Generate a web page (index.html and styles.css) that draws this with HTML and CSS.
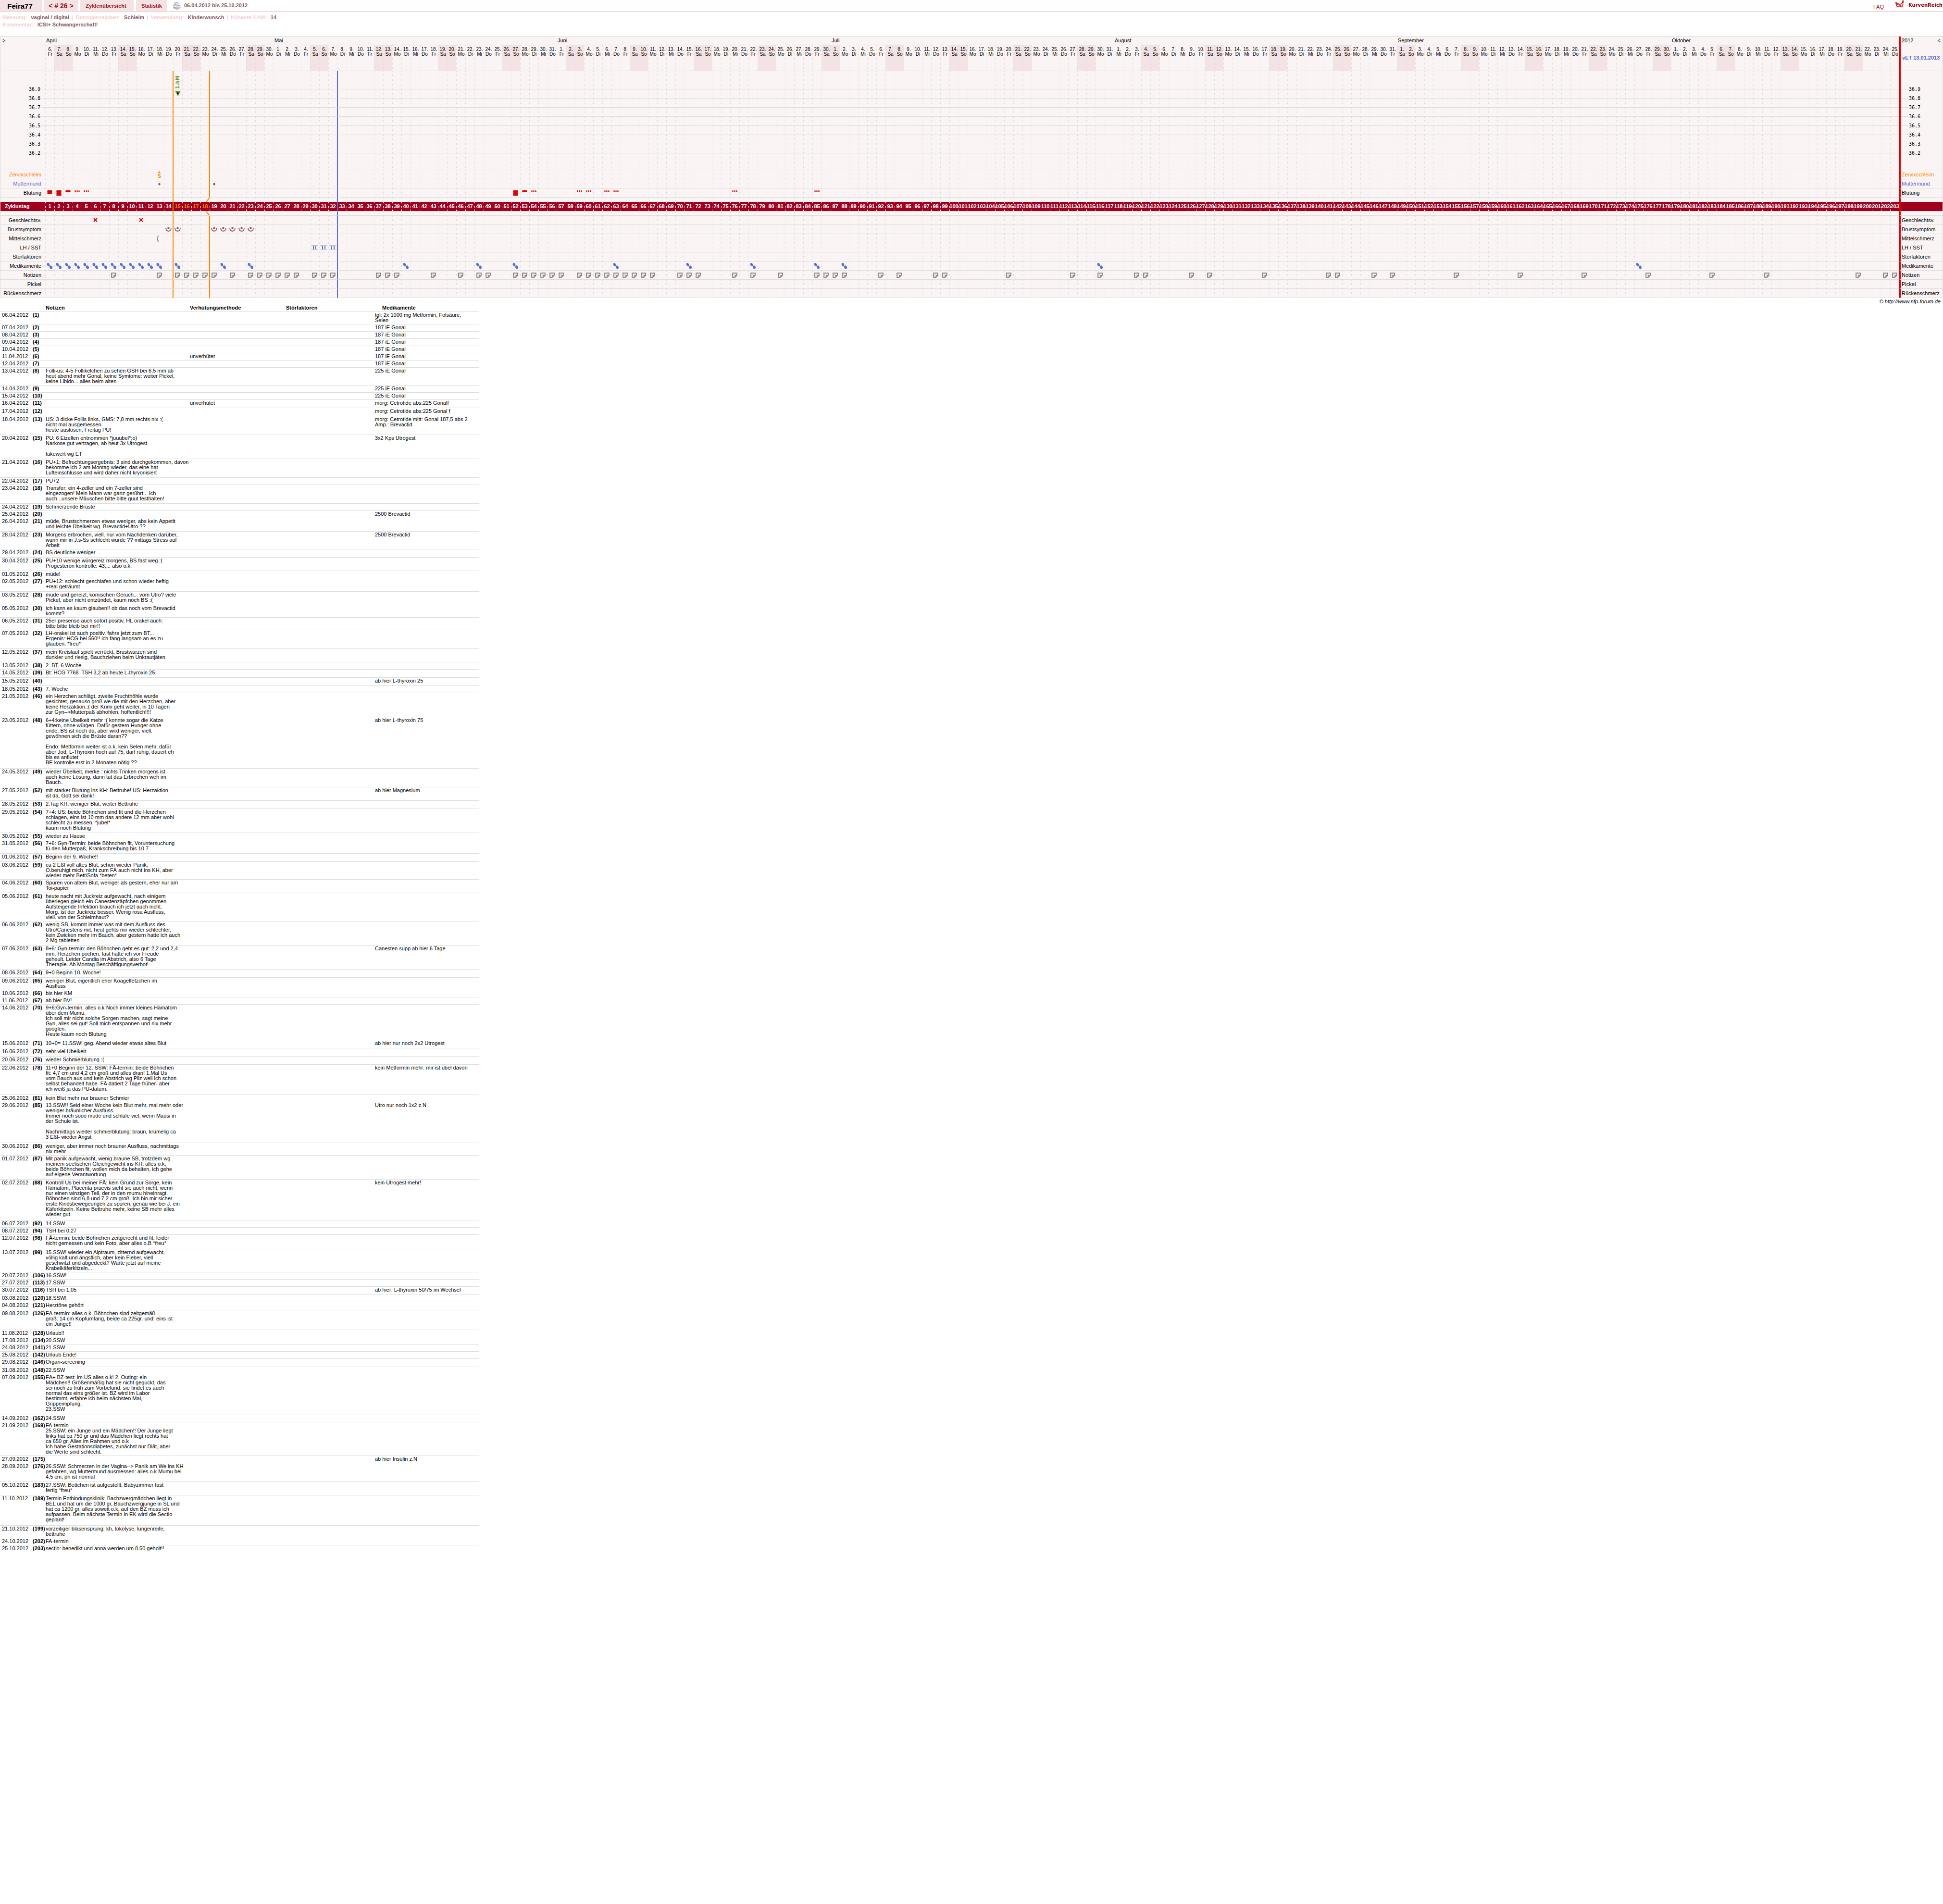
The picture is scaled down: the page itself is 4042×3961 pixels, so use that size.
FILE: index.html
```html
<!DOCTYPE html>
<html lang="de">
<head>
  <meta charset="utf-8">
  <title>KurvenReich - Feira77</title>
  <link rel="stylesheet" href="styles.css">
</head>
<body>
<header>
  <nav>
    <a class="tab user" href="#user">Feira77</a>
    <span class="tab cycle"><a href="#prev">&lt;</a> # 26 <a href="#next">&gt;</a></span>
    <a class="tab overview" href="#zyklen">Zyklenübersicht</a>
    <a class="tab stats" href="#statistik">Statistik</a>
    <a class="print" href="#print" aria-label="Drucken">
      <svg width="16" height="16" viewBox="0 0 16 16">
        <path d="M4 0.500L11 2 10 8 3 7z" fill="#cfe3f5" stroke="#8aa5bf"/>
        <path d="M1 7L4 5.500 14.500 8 15 12 8 15.500 1.500 13z" fill="#d2d2d2" stroke="#8c8c8c"/>
        <path d="M1.500 8.500L8.500 10.500 15 8.500" fill="none" stroke="#fff"/>
        <path d="M8.500 11L8.500 15" stroke="#777"/>
        <path d="M3 11.500L7 13" stroke="#555"/>
      </svg>
    </a>
    <span class="range">06.04.2012 bis 25.10.2012</span>
  </nav>
  <div class="brand">
    <a class="faq" href="#faq">FAQ</a>
    <a class="logo" href="#home">
      <svg width="22" height="20" viewBox="0 0 22 20">
        <path d="M1 12H22M6 6V20M13 6V20M18 6V20M2 16H20" stroke="#e4e4e4" fill="none"/>
        <path d="M4 6L5 13H17L18 4M4 6L10 10 13 9 18 4" fill="none" stroke="#b4102c" stroke-width="1.500"/>
        <circle cx="4" cy="6" r="1.800" fill="#f08000" stroke="#b4102c"/>
        <circle cx="8" cy="9" r="1.800" fill="#f08000" stroke="#b4102c"/>
        <circle cx="12" cy="10" r="1.800" fill="#f08000" stroke="#b4102c"/>
        <circle cx="18" cy="3" r="1.800" fill="#f08000" stroke="#b4102c"/>
      </svg>
      KurvenReich
    </a>
  </div>
</header>

<div class="info">
  <p><b>Messung:</b> <span>vaginal / digital</span> <i>|</i> <b>Östrogenzeichen:</b> <span>Schleim</span> <i>|</i> <b>Verwendung:</b> <span>Kinderwunsch</span> <i>|</i> <b>früheste 1.hM:</b> <span>14</span></p>
  <p><b>Kommentar:</b> <span>ICSI+ Schwangerschaft!</span></p>
</div>

<!-- icons used in the chart cells -->
<svg class="defs" width="0" height="0">
  <symbol id="i-pill" viewBox="0 0 13 13">
    <ellipse cx="3.500" cy="3.500" rx="2.600" ry="3.700" transform="rotate(-25 3.500 3.500)" fill="#5570cf"/>
    <ellipse cx="9" cy="9" rx="2.800" ry="3.700" transform="rotate(-25 9 9)" fill="#5570cf"/>
    <path d="M4.500 8L8 5" stroke="#b9d3ee"/>
  </symbol>
  <symbol id="i-note" viewBox="0 0 11 11">
    <path d="M1 1H10V6L6 10H1z" fill="#e4e4e4" stroke="#7a6d6b" stroke-width="1.500"/>
    <path d="M6 10V6H10z" fill="#aaa" stroke="#7a6d6b"/>
  </symbol>
  <symbol id="i-x" viewBox="0 0 9 9">
    <path d="M1 1L8 8M8 1L1 8" stroke="#d60000" stroke-width="2"/>
  </symbol>
  <symbol id="i-breast" viewBox="0 0 13 10">
    <path d="M1 2C1 11 12 11 12 2" fill="none" stroke="#8a5a5e" stroke-width="1.800"/>
    <circle cx="6.500" cy="2.500" r="2.200" fill="#8a5a5e"/>
  </symbol>
  <symbol id="i-moon" viewBox="0 0 13 13">
    <path d="M5 0.500C1 4 1 9 5 12.500" fill="none" stroke="#777" stroke-width="1.500"/>
  </symbol>
  <symbol id="i-test" viewBox="0 0 15 10">
    <path d="M0 0.500H15M0 9.500H15" stroke="#bbb"/>
    <path d="M5 1.500V8.500M10 1.500V8.500" stroke="#5570cf" stroke-width="2"/>
  </symbol>
  <symbol id="i-mumu" viewBox="0 0 11 8">
    <path d="M0 0.500H11" stroke="#a88"/>
    <ellipse cx="5.500" cy="5" rx="2.200" ry="2.600" fill="#8a5a5e"/>
  </symbol>
  <symbol id="i-b0" viewBox="0 0 11 11">
    <circle cx="1.500" cy="1.500" r="1.500" fill="#d60000"/><circle cx="5.500" cy="1.500" r="1.500" fill="#d60000"/><circle cx="9.500" cy="1.500" r="1.500" fill="#d60000"/>
  </symbol>
  <symbol id="i-b1" viewBox="0 0 11 11"><rect width="11" height="3" rx="1.500" fill="#d60000"/></symbol>
  <symbol id="i-b2" viewBox="0 0 11 11"><rect width="11" height="3" rx="1.500" fill="#d60000"/><rect y="4" width="11" height="3" rx="1.500" fill="#d60000"/></symbol>
  <symbol id="i-b3" viewBox="0 0 11 11"><rect width="11" height="3" rx="1.500" fill="#d60000"/><rect y="4" width="11" height="3" rx="1.500" fill="#d60000"/><rect y="8" width="11" height="3" rx="1.500" fill="#d60000"/></symbol>
</svg>

<table class="chart" id="chart"></table>
<p class="copy">© <a href="#forum">http://www.nfp-forum.de</a></p>

<table class="notes">
  <colgroup><col class="c-date"><col class="c-day"><col class="c-note"><col class="c-verh"><col class="c-stoer"><col class="c-med"></colgroup>
  <thead>
    <tr><th></th><th></th><th>Notizen</th><th>Verhütungsmethode</th><th>Störfaktoren</th><th class="med">Medikamente</th></tr>
  </thead>
  <tbody>
    <tr><td>06.04.2012</td><td>(1)</td><td></td><td></td><td></td><td>tgl: 2x 1000 mg Metformin, Folsäure,<br>Selen</td></tr>
    <tr><td>07.04.2012</td><td>(2)</td><td></td><td></td><td></td><td>187 iE Gonal</td></tr>
    <tr><td>08.04.2012</td><td>(3)</td><td></td><td></td><td></td><td>187 iE Gonal</td></tr>
    <tr><td>09.04.2012</td><td>(4)</td><td></td><td></td><td></td><td>187 iE Gonal</td></tr>
    <tr><td>10.04.2012</td><td>(5)</td><td></td><td></td><td></td><td>187 iE Gonal</td></tr>
    <tr><td>11.04.2012</td><td>(6)</td><td></td><td>unverhütet</td><td></td><td>187 iE Gonal</td></tr>
    <tr><td>12.04.2012</td><td>(7)</td><td></td><td></td><td></td><td>187 iE Gonal</td></tr>
    <tr><td>13.04.2012</td><td>(8)</td><td>Folli-us: 4-5 Follikelchen zu sehen GSH bei 6,5 mm ab<br>heut abend mehr Gonal, keine Symtome: weiter Pickel,<br>keine Libido... alles beim alten</td><td></td><td></td><td>225 iE Gonal</td></tr>
    <tr><td>14.04.2012</td><td>(9)</td><td></td><td></td><td></td><td>225 iE Gonal</td></tr>
    <tr><td>15.04.2012</td><td>(10)</td><td></td><td></td><td></td><td>225 iE Gonal</td></tr>
    <tr class="loose"><td>16.04.2012</td><td>(11)</td><td></td><td>unverhütet</td><td></td><td>morg: Cetrotide abs:225 Gonalf</td></tr>
    <tr class="loose"><td>17.04.2012</td><td>(12)</td><td></td><td></td><td></td><td>morg: Cetrotide abs:225 Gonal f</td></tr>
    <tr class="loose"><td>18.04.2012</td><td>(13)</td><td>US: 3 dicke Follis links, GMS: 7,8 mm rechts nix :(<br>nicht mal ausgemessen.<br>heute auslösen, Freitag PU!</td><td></td><td></td><td>morg: Cetrotide mitt: Gonal 187,5 abs 2<br>Amp.: Brevactid</td></tr>
    <tr class="loose"><td>20.04.2012</td><td>(15)</td><td>PU: 6 Eizellen entnommen *juuubel*;o)<br>Narkose gut vertragen, ab heut 3x Utrogest<br><br>fakewert wg ET</td><td></td><td></td><td>3x2 Kps Utrogest</td></tr>
    <tr class="loose"><td>21.04.2012</td><td>(16)</td><td>PU+1: Befruchtungsergebnis: 3 sind durchgekommen, davon<br>bekomme ich 2 am Montag wieder, das eine hat<br>Lufteinschlüsse und wird daher nicht kryonisiert</td><td></td><td></td><td></td></tr>
    <tr><td>22.04.2012</td><td>(17)</td><td>PU+2</td><td></td><td></td><td></td></tr>
    <tr class="loose"><td>23.04.2012</td><td>(18)</td><td>Transfer: ein 4-zeller und ein 7-zeller sind<br>eingezogen! Mein Mann war ganz gerührt... ich<br>auch...unsere Mäuschen bitte bitte guut festhalten!</td><td></td><td></td><td></td></tr>
    <tr><td>24.04.2012</td><td>(19)</td><td>Schmerzende Brüste</td><td></td><td></td><td></td></tr>
    <tr><td>25.04.2012</td><td>(20)</td><td></td><td></td><td></td><td>2500 Brevactid</td></tr>
    <tr class="loose"><td>26.04.2012</td><td>(21)</td><td>müde, Brustschmerzen etwas weniger, abs kein Appetit<br>und leichte Übelkeit wg. Brevactid+Utro ??</td><td></td><td></td><td></td></tr>
    <tr><td>28.04.2012</td><td>(23)</td><td>Morgens erbrochen, viell. nur vom Nachdenken darüber,<br>wann mir in J.s-Ss schlecht wurde ?? mittags Stress auf<br>Arbeit</td><td></td><td></td><td>2500 Brevactid</td></tr>
    <tr class="loose"><td>29.04.2012</td><td>(24)</td><td>BS deutliche weniger</td><td></td><td></td><td></td></tr>
    <tr class="loose"><td>30.04.2012</td><td>(25)</td><td>PU+10 wenige würgereiz morgens, BS fast weg :(<br>Progesteron kontrolle: 43,... also o.k.</td><td></td><td></td><td></td></tr>
    <tr><td>01.05.2012</td><td>(26)</td><td>müde!</td><td></td><td></td><td></td></tr>
    <tr class="loose"><td>02.05.2012</td><td>(27)</td><td>PU+12: schlecht geschlafen und schon wieder heftig<br>+real geträumt</td><td></td><td></td><td></td></tr>
    <tr class="loose"><td>03.05.2012</td><td>(28)</td><td>müde und gereizt, komischen Geruch... vom Utro? viele<br>Pickel, aber nicht entzündet, kaum noch BS :(</td><td></td><td></td><td></td></tr>
    <tr><td>05.05.2012</td><td>(30)</td><td>ich kann es kaum glauben!! ob das noch vom Brevactid<br>kommt?</td><td></td><td></td><td></td></tr>
    <tr><td>06.05.2012</td><td>(31)</td><td>25er presense auch sofort positiv, HL orakel auch:<br>bitte bitte bleib bei mir!!</td><td></td><td></td><td></td></tr>
    <tr class="loose"><td>07.05.2012</td><td>(32)</td><td>LH-orakel ist auch positiv, fahre jetzt zum BT...<br>Ergenis: HCG bei 560!! ich fang langsam an es zu<br>glauben. *freu*</td><td></td><td></td><td></td></tr>
    <tr class="loose"><td>12.05.2012</td><td>(37)</td><td>mein Kreislauf spielt verrückt, Brustwarzen sind<br>dunkler und riesig, Bauchziehen beim Unkrautjäten</td><td></td><td></td><td></td></tr>
    <tr><td>13.05.2012</td><td>(38)</td><td>2. BT. 6.Woche</td><td></td><td></td><td></td></tr>
    <tr class="loose"><td>14.05.2012</td><td>(39)</td><td>Bt: HCG 7768&nbsp; TSH 3,2 ab heute L-thyroxin 25</td><td></td><td></td><td></td></tr>
    <tr class="loose"><td>15.05.2012</td><td>(40)</td><td></td><td></td><td></td><td>ab hier L-thyroxin 25</td></tr>
    <tr><td>18.05.2012</td><td>(43)</td><td>7. Woche</td><td></td><td></td><td></td></tr>
    <tr class="loose"><td>21.05.2012</td><td>(46)</td><td>ein Herzchen schlägt, zweite Fruchthöhle wurde<br>gesichtet, genauso groß we die mit den Herzchen, aber<br>keine Herzaktion.:( der Krimi geht weiter, in 10 Tagen<br>zur Gyn--&gt;Mutterpaß abhohlen, hoffentlich!!!!</td><td></td><td></td><td></td></tr>
    <tr class="wide"><td>23.05.2012</td><td>(48)</td><td>6+4:keine Übelkeit mehr :( konnte sogar die Katze<br>füttern, ohne würgen. Dafür gestern Hunger ohne<br>ende. BS ist noch da, aber wird weniger, viell.<br>gewöhnen sich die Brüste daran??<br><br>Endo: Metformin weiter ist o.k, kein Selen mehr, dafür<br>aber Jod, L-Thyroxin hoch auf 75, darf ruhig, dauert eh<br>bis es anflutet<br>BE kontrolle erst in 2 Monaten nötig ??</td><td></td><td></td><td>ab hier L-thyroxin 75</td></tr>
    <tr class="loose"><td>24.05.2012</td><td>(49)</td><td>wieder Übelkeit, merke : nichts Trinken morgens ist<br>auch keine Lösung, dann tut das Erbrechen weh im<br>Bauch.</td><td></td><td></td><td></td></tr>
    <tr class="loose"><td>27.05.2012</td><td>(52)</td><td>mit starker Blutung ins KH: Bettruhe! US: Herzaktion<br>ist da, Gott sei dank!</td><td></td><td></td><td>ab hier Magnesium</td></tr>
    <tr class="loose"><td>28.05.2012</td><td>(53)</td><td>2.Tag KH, weniger Blut, weiter Bettruhe</td><td></td><td></td><td></td></tr>
    <tr class="loose"><td>29.05.2012</td><td>(54)</td><td>7+4: US: beide Böhnchen sind fit und die Herzchen<br>schlagen, eins ist 10 mm das andere 12 mm aber wohl<br>schlecht zu messen. *jubel*<br>kaum noch Blutung</td><td></td><td></td><td></td></tr>
    <tr><td>30.05.2012</td><td>(55)</td><td>wieder zu Hause</td><td></td><td></td><td></td></tr>
    <tr class="loose"><td>31.05.2012</td><td>(56)</td><td>7+6: Gyn-Termin: beide Böhnchen fit, Voruntersuchung<br>fü den Mutterpaß, Krankschreibung bis 10.7</td><td></td><td></td><td></td></tr>
    <tr class="loose"><td>01.06.2012</td><td>(57)</td><td>Beginn der 9. Woche!!</td><td></td><td></td><td></td></tr>
    <tr><td>03.06.2012</td><td>(59)</td><td>ca 2 Eßl voll altes Blut, schon wieder Panik,<br>O.beruhigt mich, nicht zum FÄ auch nicht ins KH, aber<br>wieder mehr Bett/Sofa *beten*</td><td></td><td></td><td></td></tr>
    <tr class="loose"><td>04.06.2012</td><td>(60)</td><td>Spuren von altem Blut, weniger als gestern, eher nur am<br>Toi-papier</td><td></td><td></td><td></td></tr>
    <tr><td>05.06.2012</td><td>(61)</td><td>heute nacht mit Juckreiz aufgewacht, nach einigem<br>überlegen gleich ein Canestenzäpfchen genommen.<br>Aufsteigende Infektion brauch ich jetzt auch nicht.<br>Morg. ist der Juckreiz besser. Wenig rosa Ausfluss,<br>viell. von der Schleimhaut?</td><td></td><td></td><td></td></tr>
    <tr class="loose"><td>06.06.2012</td><td>(62)</td><td>wenig SB, kommt immer was mit dem Ausfluss des<br>Utro/Canestens mit, heut gehts mir wieder schlechter,<br>kein Zwicken mehr im Bauch, aber gestern hatte ich auch<br>2 Mg-tabletten</td><td></td><td></td><td></td></tr>
    <tr class="loose"><td>07.06.2012</td><td>(63)</td><td>8+6: Gyn-termin: den Böhnchen geht es gut: 2,2 und 2,4<br>mm, Herzchen pochen, fast hätte ich vor Freude<br>geheult. Leider Candia im Abstrich, also 6 Tage<br>Therapie. Ab Montag Beschäftigungsverbot!</td><td></td><td></td><td>Canesten supp ab hier 6 Tage</td></tr>
    <tr class="loose"><td>08.06.2012</td><td>(64)</td><td>9+0 Beginn 10. Woche!</td><td></td><td></td><td></td></tr>
    <tr><td>09.06.2012</td><td>(65)</td><td>weniger Blut, eigentlich eher Koagelfetzchen im<br>Ausfluss</td><td></td><td></td><td></td></tr>
    <tr><td>10.06.2012</td><td>(66)</td><td>bis hier KM</td><td></td><td></td><td></td></tr>
    <tr><td>11.06.2012</td><td>(67)</td><td>ab hier BV!</td><td></td><td></td><td></td></tr>
    <tr class="wide"><td>14.06.2012</td><td>(70)</td><td>9+6:Gyn-termin: alles o.k Noch immer kleines Hämatom<br>über dem Mumu.<br>Ich soll mir nicht solche Sorgen machen, sagt meine<br>Gyn, alles sei gut! Soll mich entspannen und nix mehr<br>googlen.<br>Heute kaum noch Blutung</td><td></td><td></td><td></td></tr>
    <tr class="loose"><td>15.06.2012</td><td>(71)</td><td>10+0= 11.SSW! geg. Abend wieder etwas altes Blut</td><td></td><td></td><td>ab hier nur noch 2x2 Utrogest</td></tr>
    <tr class="loose"><td>16.06.2012</td><td>(72)</td><td>sehr viel Übelkeit</td><td></td><td></td><td></td></tr>
    <tr class="loose"><td>20.06.2012</td><td>(76)</td><td>wieder Schmierblutung :(</td><td></td><td></td><td></td></tr>
    <tr class="wide"><td>22.06.2012</td><td>(78)</td><td>11+0 Beginn der 12. SSW: FÄ-termin: beide Böhnchen<br>fit: 4,7 cm und 4,2 cm groß und alles dran! 1.Mal Us<br>vom Bauch aus und kein Abstrich wg Pilz weil ich schon<br>selbst behandelt habe. FÄ datiert 2 Tage früher- aber<br>ich weiß ja das PU-datum.</td><td></td><td></td><td>kein Metformin mehr: mir ist übel davon</td></tr>
    <tr><td>25.06.2012</td><td>(81)</td><td>kein Blut mehr nur brauner Schmier</td><td></td><td></td><td></td></tr>
    <tr class="wide"><td>29.06.2012</td><td>(85)</td><td>13.SSW!! Seid einer Woche kein Blut mehr, mal mehr oder<br>weniger bräunlicher Ausfluss.<br>Immer noch sooo müde und schlafe viel, wenn Mausi in<br>der Schule ist.<br><br>Nachmittags wieder schmierblutung: braun, krümelig ca<br>3 Eßl- wieder Angst</td><td></td><td></td><td>Utro nur noch 1x2 z.N</td></tr>
    <tr><td>30.06.2012</td><td>(86)</td><td>weniger, aber immer noch brauner Ausfluss, nachmittags<br>nix mehr</td><td></td><td></td><td></td></tr>
    <tr class="loose"><td>01.07.2012</td><td>(87)</td><td>Mit panik aufgewacht, wenig braune SB, trotzdem wg<br>meinem seelischen Gleichgewicht ins KH: alles o.k,<br>beide Böhnchen fit, wollen mich da behalten, ich gehe<br>auf eigene Verantwortung</td><td></td><td></td><td></td></tr>
    <tr class="wide"><td>02.07.2012</td><td>(88)</td><td>Kontroll Us bei meiner FÄ: kein Grund zur Sorge, kein<br>Hämatom, Placenta praevis sieht sie auch nicht, wenn<br>nur einen winzigen Teil, der in den mumu hineinragt.<br>Böhnchen sind 6,8 und 7,2 cm groß. Ich bin mir sicher<br>erste Kindsbewegeungen zu spüren, genau wie bei J. ein<br>Käferkitzeln. Keine Bettruhe mehr, keine SB mehr alles<br>wieder gut.</td><td></td><td></td><td>kein Utrogest mehr!</td></tr>
    <tr><td>06.07.2012</td><td>(92)</td><td>14.SSW</td><td></td><td></td><td></td></tr>
    <tr><td>08.07.2012</td><td>(94)</td><td>TSH bei 0,27</td><td></td><td></td><td></td></tr>
    <tr class="wide"><td>12.07.2012</td><td>(98)</td><td>FÄ-termin: beide Böhnchen zeitgerecht und fit, leider<br>nicht gemessen und kein Foto, aber alles o.B *freu*</td><td></td><td></td><td></td></tr>
    <tr><td>13.07.2012</td><td>(99)</td><td>15.SSW! wieder ein Alptraum, zitternd aufgewacht,<br>völlig kalt und ängstlich, aber kein Fieber, viell<br>geschwitzt und abgedeckt? Warte jetzt auf meine<br>Krabelkäferkitzeln...</td><td></td><td></td><td></td></tr>
    <tr><td>20.07.2012</td><td>(106)</td><td>16.SSW!</td><td></td><td></td><td></td></tr>
    <tr><td>27.07.2012</td><td>(113)</td><td>17.SSW</td><td></td><td></td><td></td></tr>
    <tr class="loose"><td>30.07.2012</td><td>(116)</td><td>TSH bei 1,05</td><td></td><td></td><td>ab hier: L-thyroxin 50/75 im Wechsel</td></tr>
    <tr><td>03.08.2012</td><td>(120)</td><td>18.SSW!</td><td></td><td></td><td></td></tr>
    <tr class="loose"><td>04.08.2012</td><td>(121)</td><td>Herztöne gehört</td><td></td><td></td><td></td></tr>
    <tr class="wide"><td>09.08.2012</td><td>(126)</td><td>FÄ-termin: alles o.k. Böhnchen sind zeitgemäß<br>groß: 14 cm Kopfumfang, beide ca 225gr. und: eins ist<br>ein Junge!!</td><td></td><td></td><td></td></tr>
    <tr><td>11.08.2012</td><td>(128)</td><td>Urlaub!!</td><td></td><td></td><td></td></tr>
    <tr><td>17.08.2012</td><td>(134)</td><td>20.SSW</td><td></td><td></td><td></td></tr>
    <tr><td>24.08.2012</td><td>(141)</td><td>21.SSW</td><td></td><td></td><td></td></tr>
    <tr><td>25.08.2012</td><td>(142)</td><td>Urlaub Ende!</td><td></td><td></td><td></td></tr>
    <tr class="loose"><td>29.08.2012</td><td>(146)</td><td>Organ-screening</td><td></td><td></td><td></td></tr>
    <tr><td>31.08.2012</td><td>(148)</td><td>22.SSW</td><td></td><td></td><td></td></tr>
    <tr class="wide"><td>07.09.2012</td><td>(155)</td><td>FÄ+ BZ-test: im US alles o.k! 2. Outing: ein<br>Mädchen!! Größenmäßig hat sie nicht geguckt, das<br>sei noch zu früh zum Vorbefund, sie findet es auch<br>normal das eins größer ist. BZ wird im Labor<br>bestimmt, erfahre ich beim nächsten Mal,<br>Grippeimpfung.<br>23.SSW</td><td></td><td></td><td></td></tr>
    <tr><td>14.09.2012</td><td>(162)</td><td>24.SSW</td><td></td><td></td><td></td></tr>
    <tr><td>21.09.2012</td><td>(169)</td><td>FA-termin<br>25.SSW: ein Junge und ein Mädchen!! Der Junge liegt<br>links hat ca 750 gr und das Mädchen liegt rechts hat<br>ca 650 gr. Alles im Rahmen und o.k<br>Ich habe Gestationsdiabetes, zunächst nur Diät, aber<br>die Werte sind schlecht.</td><td></td><td></td><td></td></tr>
    <tr><td>27.09.2012</td><td>(175)</td><td></td><td></td><td></td><td>ab hier Insulin z.N</td></tr>
    <tr class="loose"><td>28.09.2012</td><td>(176)</td><td>26.SSW: Schmerzen in der Vagina--&gt; Panik am We ins KH<br>gefahren, wg Muttermund ausmessen: alles o.k Mumu bei<br>4,5 cm, ph ist normal</td><td></td><td></td><td></td></tr>
    <tr class="loose"><td>05.10.2012</td><td>(183)</td><td>27.SSW: Bettchen ist aufgestellt, Babyzimmer fast<br>fertig *freu*</td><td></td><td></td><td></td></tr>
    <tr class="wide"><td>11.10.2012</td><td>(189)</td><td>Termin Entbindungsklinik: Bachzwergmädchen liegt in<br>BEL und hat um die 1000 gr, Bauchzwergjunge in SL und<br>hat ca 1200 gr, alles soweit o.k, auf den BZ muss ich<br>aufpassen. Beim nächste Termin in EK wird die Sectio<br>geplant!</td><td></td><td></td><td></td></tr>
    <tr><td>21.10.2012</td><td>(199)</td><td>vorzeitiger blasensprung: kh, tokolyse, lungenreife,<br>bettruhe</td><td></td><td></td><td></td></tr>
    <tr><td>24.10.2012</td><td>(202)</td><td>FA-termin</td><td></td><td></td><td></td></tr>
    <tr><td>25.10.2012</td><td>(203)</td><td>sectio: benedikt und anna werden um 8.50 geholt!!</td><td></td><td></td><td></td></tr>
  </tbody>
</table>

<script src="chart.js"></script>
</body>
</html>
```
FILE: styles.css
```css
body {
  margin: 0;
  background-color: #fff;
  font-family: "Liberation Sans", Arial, sans-serif;
  font-size: 11px;
  color: #000;
}
a {
  color: inherit;
  text-decoration: none;
}
p {
  margin: 0;
}

/* top bar */
header {
  display: flex;
  justify-content: space-between;
  height: 23px;
  border-bottom: 2px solid #f0dada;
}
nav {
  display: flex;
  align-items: center;
  font-weight: bold;
  color: #a01020;
}
.tab {
  box-sizing: border-box;
  height: 23px;
  margin-right: 4px;
  line-height: 25px;
  text-align: center;
  background-color: #f4e3e4;
}
.user {
  width: 87px;
  padding-right: 4px;
  font-size: 15px;
  color: #000;
}
.cycle {
  width: 72px;
  font-size: 14px;
}
.overview {
  width: 111px;
  padding-right: 4px;
}
.stats {
  width: 65px;
  margin-left: 1px;
}
.print {
  height: 16px;
  margin-left: 8px;
}
.range {
  margin-left: 7px;
  line-height: 25px;
  color: #8a5a5e;
}
.brand {
  display: flex;
  gap: 22px;
  color: #a01020;
}
.faq {
  line-height: 28px;
}
.logo {
  display: flex;
  gap: 7px;
  padding-right: 1px;
  font: bold 10px/21px "DejaVu Sans", sans-serif;
  color: #900010;
}
.info {
  height: 46px;
  padding: 4px 5px 0;
  font-weight: bold;
  line-height: 15px;
  color: #8a5a5e;
}
.info b,
.info i {
  font-style: normal;
  color: #f7cdce;
}
.info i {
  margin: 0 2px;
}
.info span {
  margin-left: 5px;
}
.defs {
  position: absolute;
}

/* chart */
.chart {
  width: 100%;
  table-layout: fixed;
  border-spacing: 0;
  border: 1px solid #ddd;
  border-bottom: 0;
  background-color: #faf4f4;
}
.chart td,
.chart th {
  box-sizing: border-box;
  height: 19px;
  padding: 0;
  border-bottom: 1px solid #ddd;
  font-weight: normal;
  line-height: 11px;
  white-space: nowrap;
}
.chart .label {
  padding-right: 8px;
  text-align: right;
}
.chart .side {
  padding-left: 2px;
  border-left: 3px solid #de0000;
  text-align: left;
}
.chart .months .label {
  padding-left: 4px;
  text-align: left;
}
.chart .d {
  text-align: center;
  background-image: linear-gradient(#ddd 2px, transparent 2px 7px, #ddd 7px 11px, transparent 11px 17px, #ddd 17px);
  background-size: 1px 19px;
  background-repeat: repeat-y;
}
.chart .d.end {
  background-image: linear-gradient(#ff8000, #ff8000);
  box-shadow: -1px 0 #ff8000;
}
.chart .d.test {
  background-image: linear-gradient(#5a6ccf, #5a6ccf);
  box-shadow: -1px 0 #5a6ccf;
}
.chart svg {
  display: block;
  margin: 0 auto;
}
.chart .months td,
.chart .months th {
  height: 18px;
  padding-left: 2px;
  text-align: left;
}
.months .fold {
  float: right;
  margin-right: 4px;
}
.chart .days .d {
  height: 54px;
  padding: 4px 0 0 2px;
  font-size: 10px;
  line-height: 10px;
  vertical-align: top;
}
.chart .days .we {
  background-color: #f4e3e4;
  border-bottom-color: #f4e3e4;
}
.chart .due {
  padding-left: 3px;
  font-weight: bold;
  color: #5a6ccf;
}
.chart .top td {
  height: 38px;
}
.chart .last td {
  height: 35px;
}
.chart .axis {
  vertical-align: top;
  font-family: "DejaVu Sans Mono", monospace;
  font-size: 10px;
}
.axis div {
  display: flex;
  align-items: center;
  justify-content: flex-end;
  gap: 1px;
  line-height: 19px;
}
.axis div::after {
  content: "";
  width: 9px;
  border-top: 1px solid #ddd;
}
.chart .label.axis,
.chart .side.axis {
  padding: 28px 0 0;
}
.side.axis div {
  flex-direction: row-reverse;
}
.side.axis div::after {
  width: 16px;
}
.marker {
  position: relative;
}
.marker div {
  position: absolute;
  top: 9px;
  left: 4px;
}
.marker span {
  display: block;
  height: 32px;
  writing-mode: vertical-rl;
  transform: rotate(180deg);
  text-align: right;
  font: bold 10px/11px "DejaVu Sans", sans-serif;
  color: #6b9a32;
}
.cervix {
  color: #ff8000;
}
.chart .cervix .d {
  font-weight: bold;
  font-size: 10px;
  line-height: 8px;
}
.mumu .label,
.mumu .side {
  color: #5a6ccf;
}
.chart .bleed .d,
.chart .sex .d {
  padding-top: 4px;
  vertical-align: top;
}
.chart .gap td {
  height: 9px;
  border-bottom: 0;
}
.chart .gap.lined td {
  border-bottom: 1px solid #ddd;
}
.chart .gap svg {
  margin: 0 0 0 auto;
}
.chart .cycleday td,
.chart .cycleday th {
  height: 20px;
  background-color: #a0001e;
  font-weight: bold;
  color: #fff;
}
.chart .cycleday .label {
  padding-left: 9px;
  text-align: left;
}
.chart .cycleday .d {
  background-image: linear-gradient(#fff 3px, transparent 3px 8px, #fff 8px 12px, transparent 12px 16px, #fff 16px);
}
.chart .cycleday .end {
  background-image: linear-gradient(#ff8000, #ff8000);
}
.chart .cycleday .test {
  background-image: linear-gradient(#5a6ccf, #5a6ccf);
}
.chart .cycleday .fertile {
  color: #ff8000;
}
.copy {
  padding-right: 5px;
  font-style: italic;
  line-height: 14px;
  text-align: right;
}

/* notes list */
.notes {
  table-layout: fixed;
  width: 996px;
  border-spacing: 0;
}
.c-date { width: 68px; }
.c-day { width: 27px; }
.c-note { width: 300px; }
.c-verh { width: 200px; }
.c-stoer { width: 185px; }
.notes th,
.notes td {
  padding: 1px 0 2px;
  border-bottom: 1px solid #ddd;
  line-height: 11px;
  text-align: left;
  vertical-align: top;
  white-space: nowrap;
}
.notes th.med {
  padding-left: 15px;
}
.notes .loose td {
  padding-bottom: 4px;
}
.notes .wide td {
  padding-bottom: 6px;
}
.notes td:first-child {
  padding-left: 4px;
}
.notes td:nth-child(2) {
  font-weight: bold;
}
.notes tr:last-child td {
  border-bottom: 0;
}
```
FILE: chart.js
```js
const DAYS = 203;
const weekday = ['So', 'Mo', 'Di', 'Mi', 'Do', 'Fr', 'Sa'];
const monthName = ['Januar', 'Februar', 'März', 'April', 'Mai', 'Juni', 'Juli', 'August', 'September', 'Oktober'];
const chart = document.getElementById('chart');

// "1-3,7" -> [1, 2, 3, 7]
function days(list) {
  const out = [];
  list.split(',').forEach(part => {
    const [a, b] = part.split('-').map(Number);
    for (let i = a; i <= (b || a); i++) out.push(i);
  });
  return out;
}

function icon(name, w, h) {
  return `<svg width="${w}" height="${h}"><use href="#i-${name}"/></svg>`;
}

function fill(list, html) {
  const map = {};
  days(list).forEach(d => map[d] = html);
  return map;
}

function dayCells(content, extra) {
  let html = '';
  for (let d = 1; d <= DAYS; d++) {
    let cls = 'd';
    if (d === 15 || (d === 19 && !extra)) cls += ' end';
    if (d === 33) cls += ' test';
    if (extra === 'cycleday' && d >= 15 && d <= 18) cls += ' fertile';
    html += `<td class="${cls}">${content[d] || ''}</td>`;
  }
  return html;
}

function row(cls, label, content) {
  return `<tr class="${cls}"><th class="label">${label}</th>${dayCells(content)}<td class="side">${label}</td></tr>`;
}

// months
let months = '<tr class="months"><th class="label">&gt;</th>';
let head = '<tr class="days"><th class="label"></th>';
let span = 0;
for (let d = 1; d <= DAYS; d++) {
  const date = new Date(2012, 3, 5 + d);
  const next = new Date(2012, 3, 6 + d);
  const we = date.getDay() % 6 === 0 ? ' we' : '';
  head += `<td class="d${we}">${date.getDate()}.<br>${weekday[date.getDay()]}</td>`;
  span++;
  if (next.getMonth() !== date.getMonth() || d === DAYS) {
    months += `<td colspan="${span}">${monthName[date.getMonth()]}</td>`;
    span = 0;
  }
}
months += '<td class="side">2012<span class="fold">&lt;</span></td></tr>';
head += '<td class="side due">vET 13.01.2013</td></tr>';

// temperature area
let temps = '';
for (let t = 369; t >= 362; t--) temps += `<div>${(t / 10).toFixed(1)}</div>`;
const marker = '<div><span>1.hM</span><svg width="12" height="11"><path d="M0 0H12L6 11z" fill="#6b9a32"/><path d="M6 2L8 5 6 8 4 5z" fill="#000"/></svg></div>';
let curve = `<tr class="top"><th class="label axis" rowspan="9">${temps}</th>`
  + dayCells({}).replace('<td class="d end">', '<td class="d end marker">' + marker)
  + `<td class="side axis" rowspan="9">${temps}</td></tr>`;
for (let i = 0; i < 7; i++) curve += `<tr>${dayCells({})}</tr>`;
curve += `<tr class="last">${dayCells({})}</tr>`;

const bleeding = Object.assign(
  fill('4,5,54,59,60,62,63,76,85', icon('b0', 11, 11)),
  fill('3,53', icon('b1', 11, 11)),
  fill('1', icon('b2', 11, 11)),
  fill('2,52', icon('b3', 11, 11))
);
const numbers = {};
for (let d = 1; d <= DAYS; d++) numbers[d] = d;

const slantIn = '<svg width="9" height="9"><path d="M9 0L2 9" stroke="#ff8000" stroke-width="2"/></svg>';
const slantOut = '<svg width="9" height="8"><path d="M2 0L9 8" stroke="#ff8000" stroke-width="2"/></svg>';

chart.innerHTML = '<colgroup><col style="width:93px"><col span="203"><col style="width:90px"></colgroup>'
  + months + head + curve
  + row('cervix', 'Zervixschleim', fill('13', '+<br>S'))
  + row('mumu', 'Muttermund', fill('13,19', icon('mumu', 11, 8)))
  + row('bleed', 'Blutung', bleeding)
  + `<tr class="gap"><td></td>${dayCells(fill('18', slantIn), 'gap')}<td class="side"></td></tr>`
  + `<tr class="cycleday"><th class="label">Zyklustag</th>${dayCells(numbers, 'cycleday')}<td class="side"></td></tr>`
  + `<tr class="gap lined"><td></td>${dayCells(fill('18', slantOut), 'gap')}<td class="side"></td></tr>`
  + row('sex', 'Geschlechtsv.', fill('6,11', icon('x', 9, 9)))
  + row('', 'Brustsymptom', fill('14,15,19-23', icon('breast', 13, 10)))
  + row('', 'Mittelschmerz', fill('13', icon('moon', 13, 13)))
  + row('', 'LH / SST', fill('30-32', icon('test', 15, 10)))
  + row('', 'Störfaktoren', {})
  + row('', 'Medikamente', fill('1-13,15,20,23,40,48,52,63,71,78,85,88,116,175', icon('pill', 13, 13)))
  + row('', 'Notizen', fill('8,13,15-19,21,23-28,30-32,37-39,43,46,48,49,52-57,59-67,70-72,76,78,81,85-88,92,94,98,99,106,113,116,120,121,126,128,134,141,142,146,148,155,162,169,176,183,189,199,202,203', icon('note', 11, 11)))
  + row('', 'Pickel', {})
  + row('', 'Rückenschmerz', {});
```
